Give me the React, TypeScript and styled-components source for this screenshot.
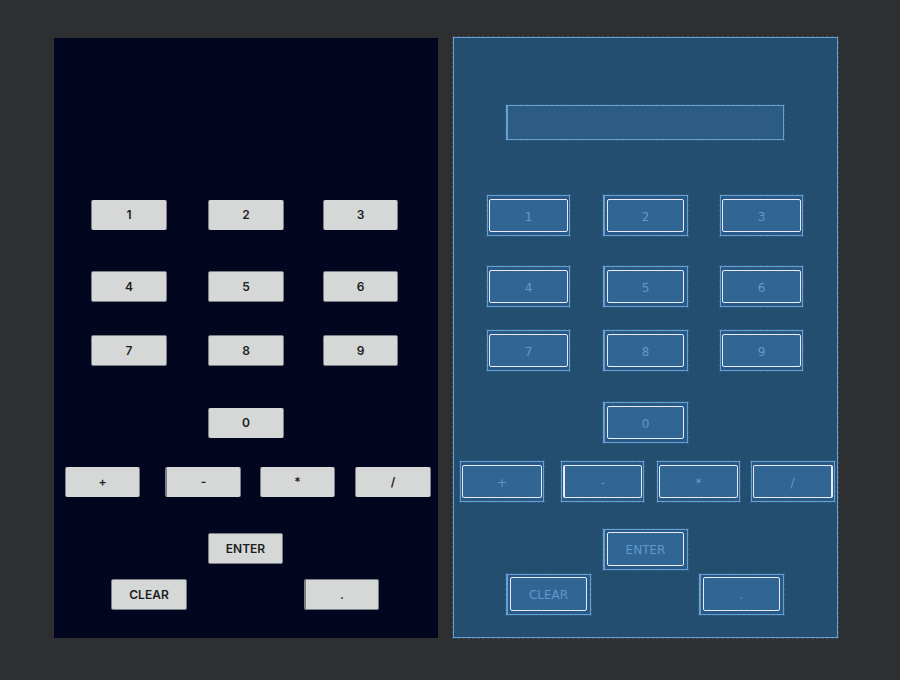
import React from "react";
import styled, { createGlobalStyle } from "styled-components";

const GlobalStyle = createGlobalStyle`
  * { box-sizing: border-box; }
  html, body { margin: 0; background: #2e2f30; }
`;

const Page = styled.main`
  display: grid;
  grid-template-columns: 384fr 385fr;
  gap: 15px;
  min-height: 100vh;
  padding: 37px 62px 42px 54px;
`;

const DesignPanel = styled.section`
  margin-top: 1px;
  padding: 162px 0 28px;
  background: #02061e;
`;

const BlueprintPanel = styled.section`
  padding: 67px 0 22px;
  border: 1px solid #6a9fd2;
  outline: 1px dashed rgba(106, 159, 210, 0.25);
  background: #234e70;
`;

const Row = styled.div<{ $tracks: string; $before: number }>`
  display: grid;
  grid-template-columns: ${(p) => p.$tracks};
  margin-top: ${(p) => p.$before}px;

  & > :nth-child(1) { grid-column: 2; }
  & > :nth-child(2) { grid-column: 4; }
  & > :nth-child(3) { grid-column: 6; }
  & > :nth-child(4) { grid-column: 8; }
`;

const Key = styled.button<{ $soft?: boolean; $thick?: boolean }>`
  height: ${(p) => (p.$soft ? 31 : 30)}px;
  padding: 0;
  border: 0 solid #7c7e88;
  border-width: ${(p) => (p.$soft ? 1 : 0)}px 1px ${(p) => (p.$soft ? 1 : 0)}px
    ${(p) => (p.$thick ? 2 : 1)}px;
  border-radius: 2px;
  background: #d6d8d7;
  color: #1c1d1e;
  font: 600 12px/16px Inter, "Liberation Sans", sans-serif;
`;

const Display = styled.input`
  width: 100%;
  height: 35px;
  padding: 0 8px;
  border: 1px solid #6a9fd2;
  border-left-width: 2px;
  border-radius: 0;
  outline: 1px dashed rgba(106, 159, 210, 0.2);
  background: #2c5b84;
  color: #6a9fd2;
`;

const Frame = styled.div<{ $wide?: boolean; $tall?: boolean }>`
  display: flex;
  height: 41px;
  padding: ${(p) => (p.$tall ? "2px" : "3px")} ${(p) => (p.$wide ? "3px" : "1px")} 3px
    ${(p) => (p.$wide ? "2px" : "1px")};
  border: 1px solid #6a9fd2;
  border-left-width: ${(p) => (p.$wide ? 2 : 1)}px;
  outline: 1px dashed rgba(106, 159, 210, 0.2);
  background: #285a87;
`;

const OutlineKey = styled.button<{ $edge?: "left" | "right" }>`
  flex: 1;
  padding: 2px 0 0;
  border: 1px solid #edeaf8;
  border-left-width: ${(p) => (p.$edge === "left" ? 2 : 1)}px;
  border-right-width: ${(p) => (p.$edge === "right" ? 2 : 1)}px;
  border-radius: 2px;
  background: #306594;
  color: #6299cd;
  font: 400 12px/14px "DejaVu Sans", sans-serif;
`;

type KeySpec = { label: string; thick?: boolean; wide?: boolean; edge?: "left" | "right" };
type RowSpec = {
  keys: KeySpec[];
  solid: { tracks: string; before: number; soft?: boolean };
  outline: { tracks: string; before: number; tall?: boolean };
};

const solidDigits = "37fr 76px 41fr 76px 39fr 75px 40fr";
const outlineDigits = "33fr 83px 33fr 85px 32fr 83px 34fr";
const outlineSingle = "149fr 85px 149fr";

const digits = (a: string, b: string, c: string): KeySpec[] => [
  { label: a },
  { label: b, wide: true },
  { label: c },
];

const rows: RowSpec[] = [
  {
    keys: digits("1", "2", "3"),
    solid: { tracks: solidDigits, before: 0 },
    outline: { tracks: outlineDigits, before: 55 },
  },
  {
    keys: digits("4", "5", "6"),
    solid: { tracks: solidDigits, before: 41, soft: true },
    outline: { tracks: outlineDigits, before: 30 },
  },
  {
    keys: digits("7", "8", "9"),
    solid: { tracks: solidDigits, before: 33, soft: true },
    outline: { tracks: outlineDigits, before: 23 },
  },
  {
    keys: [{ label: "0", wide: true }],
    solid: { tracks: "154fr 76px 154fr", before: 42 },
    outline: { tracks: outlineSingle, before: 31 },
  },
  {
    keys: [
      { label: "+" },
      { label: "-", thick: true, edge: "left" },
      { label: "*" },
      { label: "/", edge: "right" },
    ],
    solid: { tracks: "11fr 75px 25fr 76px 19fr 75px 20fr 76px 7fr", before: 29 },
    outline: { tracks: "6fr 84px 17fr 83px 13fr 83px 11fr 84px 2fr", before: 18 },
  },
  {
    keys: [{ label: "ENTER", wide: true }],
    solid: { tracks: "154fr 75px 155fr", before: 36, soft: true },
    outline: { tracks: outlineSingle, before: 27, tall: true },
  },
  {
    keys: [
      { label: "CLEAR", wide: true },
      { label: ".", thick: true, wide: true },
    ],
    solid: { tracks: "57fr 76px 117fr 75px 59fr", before: 15, soft: true },
    outline: { tracks: "52fr 85px 108fr 85px 53fr", before: 4, tall: true },
  },
];

export default function App() {
  return (
    <>
      <GlobalStyle />
      <Page>
        <DesignPanel>
          {rows.map((row, i) => (
            <Row key={i} $tracks={row.solid.tracks} $before={row.solid.before}>
              {row.keys.map((k) => (
                <Key key={k.label} type="button" $soft={row.solid.soft} $thick={k.thick}>
                  {k.label}
                </Key>
              ))}
            </Row>
          ))}
        </DesignPanel>
        <BlueprintPanel>
          <Row $tracks="52fr 278fr 53fr" $before={0}>
            <Display type="text" readOnly aria-label="Display" />
          </Row>
          {rows.map((row, i) => (
            <Row key={i} $tracks={row.outline.tracks} $before={row.outline.before}>
              {row.keys.map((k) => (
                <Frame key={k.label} $wide={k.wide} $tall={row.outline.tall}>
                  <OutlineKey type="button" $edge={k.edge}>
                    {k.label}
                  </OutlineKey>
                </Frame>
              ))}
            </Row>
          ))}
        </BlueprintPanel>
      </Page>
    </>
  );
}
